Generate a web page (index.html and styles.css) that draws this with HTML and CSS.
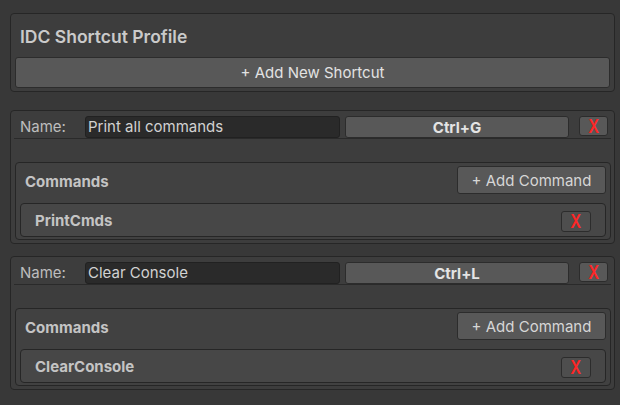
FILE: index.html
```html
<!DOCTYPE html>
<html>
<head>
<meta charset="utf-8">
<link rel="stylesheet" href="styles.css">
</head>
<body>
<div class="page">
  <section class="profile box">
    <div class="profile-title">IDC Shortcut Profile</div>
    <button class="btn add-shortcut">+ Add New Shortcut</button>
  </section>

  <section class="shortcut box">
    <div class="name-row">
      <span class="name-label">Name:</span>
      <div class="text-field">Print all commands</div>
      <button class="btn key-btn">Ctrl+G</button>
      <button class="btn x-btn"><span class="x-glyph">X</span></button>
    </div>
    <div class="commands box">
      <div class="commands-head">
        <span class="commands-title">Commands</span>
        <button class="btn add-cmd">+ Add Command</button>
      </div>
      <div class="cmd-item">
        <span class="cmd-name">PrintCmds</span>
        <button class="btn x-btn small"><span class="x-glyph">X</span></button>
      </div>
    </div>
  </section>

  <section class="shortcut box second">
    <div class="name-row">
      <span class="name-label">Name:</span>
      <div class="text-field">Clear Console</div>
      <button class="btn key-btn">Ctrl+L</button>
      <button class="btn x-btn"><span class="x-glyph">X</span></button>
    </div>
    <div class="commands box">
      <div class="commands-head">
        <span class="commands-title">Commands</span>
        <button class="btn add-cmd">+ Add Command</button>
      </div>
      <div class="cmd-item">
        <span class="cmd-name">ClearConsole</span>
        <button class="btn x-btn small"><span class="x-glyph">X</span></button>
      </div>
    </div>
  </section>
</div>
</body>
</html>
```

FILE: styles.css
```css
* { box-sizing: border-box; }
html, body {
  margin: 0;
  padding: 0;
  background: #383838;
  font-family: Inter, "Noto Sans", "DejaVu Sans", sans-serif;
  font-size: 15px;
  color: #c4c4c4;
}
.page {
  padding: 13px 5px 0 10px;
}
.box {
  border: 1px solid #262626;
  border-radius: 4px;
  background: #3d3d3d;
}
.btn {
  font-family: inherit;
  font-size: 15px;
  color: #dedede;
  background: #585858;
  border: 1px solid #2c2c2c;
  border-radius: 3px;
  padding: 0;
  margin: 0;
  display: flex;
  align-items: center;
  justify-content: center;
}
.profile {
  height: 79px;
  padding: 0 4px;
  display: flex;
  flex-direction: column;
}
.profile-title {
  height: 43px;
  display: flex;
  align-items: center;
  padding-left: 5px;
  padding-top: 2px;
  font-size: 17.5px;
  font-weight: 600;
  color: #cacaca;
}
.add-shortcut {
  height: 31px;
  width: 100%;
  color: #e2e2e2;
}
.shortcut {
  margin-top: 18px;
  height: 134px;
  padding: 5px 3px 0 3px;
}
.shortcut.second {
  margin-top: 12px;
}
.name-row {
  display: flex;
  align-items: flex-start;
  height: 23px;
  border-bottom: 1px solid #2a2a2a;
  padding-right: 3px;
}
.name-label {
  width: 71px;
  padding-left: 6px;
  line-height: 22px;
  color: #bdbdbd;
}
.text-field {
  width: 255px;
  height: 22px;
  background: #2a2a2a;
  border: 1px solid #212121;
  border-radius: 3px;
  padding-left: 2px;
  line-height: 20px;
  color: #d2d2d2;
}
.key-btn {
  width: 224px;
  height: 22px;
  margin-left: 5px;
  font-weight: 700;
  color: #e4e4e4;
}
.x-btn {
  width: 29px;
  height: 20px;
  margin-left: 10px;
  color: #ff2626;
  font-family: Inter, "DejaVu Sans", sans-serif;
  font-size: 19px;
  font-weight: 600;
  line-height: 1;
}
.x-glyph {
  display: inline-block;
  transform: scaleX(0.8);
}
.commands {
  margin: 23px 0 0 1px;
  height: 78px;
  padding: 3px 4px 0 4px;
  background: #414141;
  width: 596px;
}
.commands-head {
  display: flex;
  align-items: center;
  justify-content: space-between;
  height: 28px;
}
.commands-title {
  padding-left: 5px;
  padding-top: 2px;
  font-weight: 700;
  color: #c4c4c4;
}
.add-cmd {
  width: 149px;
  height: 28px;
  font-size: 15px;
  color: #d6d6d6;
}
.cmd-item {
  margin-top: 9px;
  height: 34px;
  background: #474747;
  border: 1px solid #262626;
  border-radius: 4px;
  display: flex;
  align-items: center;
  justify-content: space-between;
  padding: 1px 14px 0 14px;
}
.cmd-name {
  font-weight: 700;
  color: #c4c4c4;
}
.x-btn.small {
  width: 30px;
  height: 21px;
  margin-left: 0;
  margin-top: 2px;
  background: #4e4e4e;
}
```
